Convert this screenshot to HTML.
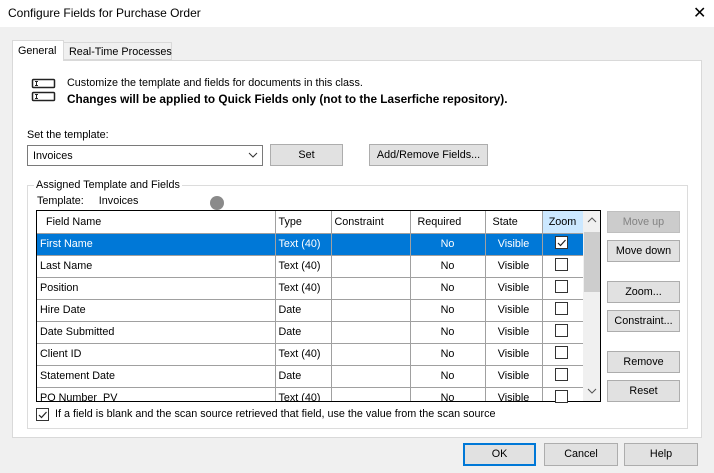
<!DOCTYPE html>
<html><head><style>
*{margin:0;padding:0;box-sizing:border-box}
body{width:714px;height:473px;background:#f0f0f0;font-family:"Liberation Sans",sans-serif;font-size:10.8px;color:#000;position:relative;overflow:hidden}
.a{position:absolute;white-space:nowrap}
.btn{position:absolute;background:#e1e1e1;border:1px solid #adadad;text-align:center;line-height:20px;font-size:10.8px;white-space:nowrap}
.cb{position:absolute;width:13px;height:13px;border:1px solid #333;background:#fff}
table{border-collapse:collapse;table-layout:fixed}
td{height:22px;border-right:1px solid #a0a0a0;border-bottom:1px solid #a0a0a0;padding:0 3px;white-space:nowrap;overflow:hidden}
</style></head><body>
<div class="a" style="left:0;top:0;width:714px;height:27px;background:#fff"></div>
<div class="a" style="left:8px;top:6px;font-size:12px">Configure Fields for Purchase Order</div>
<div class="a" style="left:693px;top:3px;font-size:16px;font-weight:300">✕</div>

<div class="a" style="left:12px;top:60px;width:690px;height:378px;background:#fff;border:1px solid #d9d9d9"></div>
<div class="a" style="left:12px;top:40px;width:52px;height:21px;background:#fff;border:1px solid #d9d9d9;border-bottom:none;padding:4px 0 0 5px">General</div>
<div class="a" style="left:63px;top:42px;width:109px;height:18px;background:#f0f0f0;border:1px solid #d9d9d9;padding:3px 0 0 5px">Real-Time Processes</div>

<svg class="a" style="left:31px;top:78px" width="25" height="26"><rect x="1.5" y="1.5" width="22" height="8" rx="1" fill="none" stroke="#222" stroke-width="1.5"/><rect x="1.5" y="14.5" width="22" height="8" rx="1" fill="none" stroke="#222" stroke-width="1.5"/><path d="M4 3.5h3M5.5 3.5v4M4 7.5h3M4 16.5h3M5.5 16.5v4M4 20.5h3" stroke="#222"/></svg>
<div class="a" style="left:67px;top:77px">Customize the template and fields for documents in this class.</div>
<div class="a" style="left:67px;top:92px;font-weight:bold;font-size:11.8px">Changes will be applied to Quick Fields only (not to the Laserfiche repository).</div>

<div class="a" style="left:27px;top:129px">Set the template:</div>
<div class="a" style="left:27px;top:145px;width:236px;height:21px;border:1px solid #7a7a7a;background:#fff;padding:4px 0 0 5px">Invoices</div>
<svg class="a" style="left:248px;top:152px" width="10" height="7"><path d="M1 1l4 4 4-4" fill="none" stroke="#333"/></svg>
<div class="btn" style="left:270px;top:144px;width:73px;height:22px">Set</div>
<div class="btn" style="left:369px;top:144px;width:119px;height:22px">Add/Remove Fields...</div>

<div class="a" style="left:27px;top:185px;width:661px;height:244px;border:1px solid #dcdcdc"></div>
<div class="a" style="left:34px;top:179px;background:#fff;padding:0 2px">Assigned Template and Fields</div>
<div class="a" style="left:37px;top:195px">Template:&nbsp;&nbsp;&nbsp;&nbsp;&nbsp;Invoices</div>
<div class="a" style="left:210px;top:196px;width:14px;height:14px;border-radius:50%;background:#8a8a8a"></div>

<div class="a" style="left:36px;top:210px;width:565px;height:192px;border:1px solid #000;overflow:hidden;background:#fff">
<table style="width:546px">
<colgroup><col style="width:238px"><col style="width:56px"><col style="width:79px"><col style="width:75px"><col style="width:57px"><col style="width:41px"></colgroup>
<tr><td style="padding-left:9px">Field Name</td><td>Type</td><td>Constraint</td><td style="padding-left:7px">Required</td><td style="padding-left:7px">State</td><td style="background:#cce8ff;text-align:center">Zoom</td></tr>
<tr style="background:#0078d7;color:#fff"><td>First Name</td><td>Text (40)</td><td></td><td style="text-align:center">No</td><td style="text-align:center">Visible</td><td></td></tr>
<tr><td>Last Name</td><td>Text (40)</td><td></td><td style="text-align:center">No</td><td style="text-align:center">Visible</td><td></td></tr>
<tr><td>Position</td><td>Text (40)</td><td></td><td style="text-align:center">No</td><td style="text-align:center">Visible</td><td></td></tr>
<tr><td>Hire Date</td><td>Date</td><td></td><td style="text-align:center">No</td><td style="text-align:center">Visible</td><td></td></tr>
<tr><td>Date Submitted</td><td>Date</td><td></td><td style="text-align:center">No</td><td style="text-align:center">Visible</td><td></td></tr>
<tr><td>Client ID</td><td>Text (40)</td><td></td><td style="text-align:center">No</td><td style="text-align:center">Visible</td><td></td></tr>
<tr><td>Statement Date</td><td>Date</td><td></td><td style="text-align:center">No</td><td style="text-align:center">Visible</td><td></td></tr>
<tr><td>PO Number_PV</td><td>Text (40)</td><td></td><td style="text-align:center">No</td><td style="text-align:center">Visible</td><td></td></tr>
</table>
<div class="a" style="left:546px;top:0;width:18px;height:192px;background:#f0f0f0"></div>
<div class="a" style="left:547px;top:21px;width:16px;height:60px;background:#cdcdcd"></div>
<svg class="a" style="left:550px;top:6px" width="10" height="7"><path d="M1 5l4-4 4 4" fill="none" stroke="#555"/></svg>
<svg class="a" style="left:550px;top:177px" width="10" height="7"><path d="M1 1l4 4 4-4" fill="none" stroke="#555"/></svg>
</div>
<div class="cb" style="left:555px;top:236px"><svg width="11" height="11" style="position:absolute;left:0;top:0"><path d="M2 6l2.5 2.5L9.5 3" fill="none" stroke="#222" stroke-width="1.2"/></svg></div>
<div class="cb" style="left:555px;top:258px"></div>
<div class="cb" style="left:555px;top:280px"></div>
<div class="cb" style="left:555px;top:302px"></div>
<div class="cb" style="left:555px;top:324px"></div>
<div class="cb" style="left:555px;top:346px"></div>
<div class="cb" style="left:555px;top:368px"></div>
<div class="cb" style="left:555px;top:390px"></div>

<div class="btn" style="left:607px;top:211px;width:73px;height:22px;background:#cccccc;border-color:#bfbfbf;color:#838383">Move up</div>
<div class="btn" style="left:607px;top:240px;width:73px;height:22px">Move down</div>
<div class="btn" style="left:607px;top:281px;width:73px;height:22px">Zoom...</div>
<div class="btn" style="left:607px;top:310px;width:73px;height:22px">Constraint...</div>
<div class="btn" style="left:607px;top:351px;width:73px;height:22px">Remove</div>
<div class="btn" style="left:607px;top:380px;width:73px;height:22px">Reset</div>

<div class="cb" style="left:36px;top:408px"><svg width="11" height="11" style="position:absolute;left:0;top:0"><path d="M2 6l2.5 2.5L9.5 3" fill="none" stroke="#222" stroke-width="1.2"/></svg></div>
<div class="a" style="left:55px;top:408px">If a field is blank and the scan source retrieved that field, use the value from the scan source</div>

<div class="btn" style="left:463px;top:443px;width:73px;height:23px;border:2px solid #0078d7;line-height:19px">OK</div>
<div class="btn" style="left:544px;top:443px;width:74px;height:23px">Cancel</div>
<div class="btn" style="left:624px;top:443px;width:74px;height:23px">Help</div>
</body></html>
